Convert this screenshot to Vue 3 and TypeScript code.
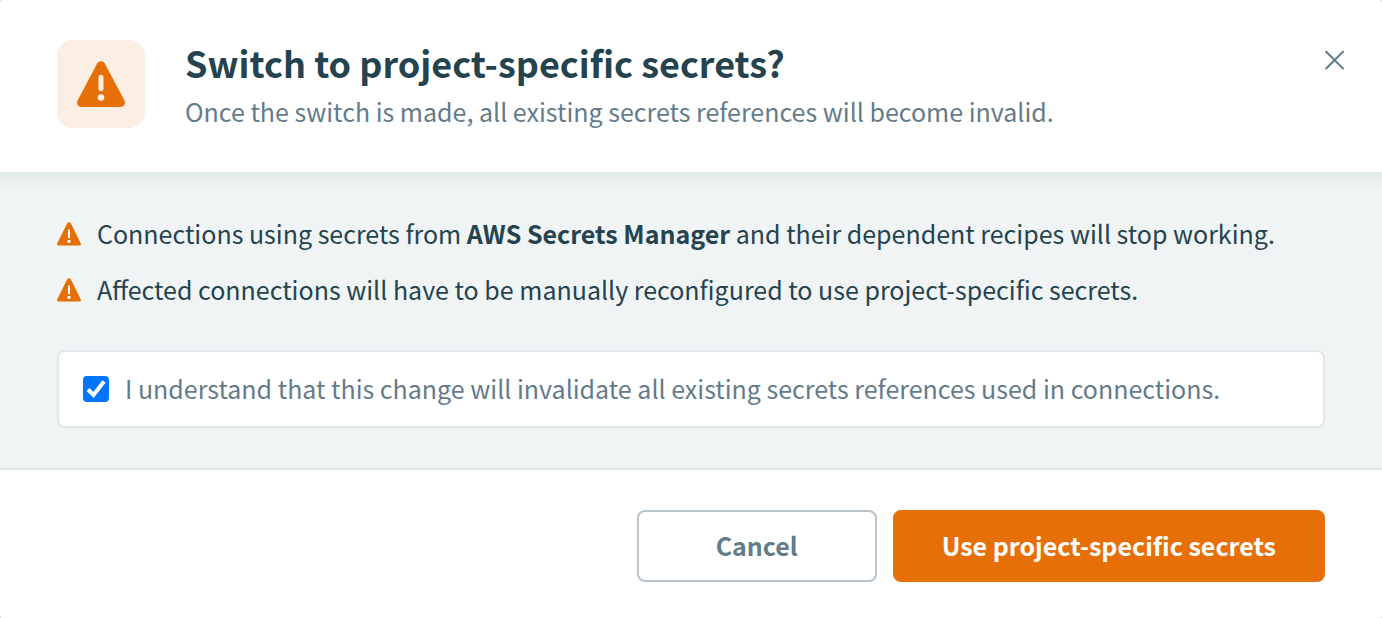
<script setup lang="ts">
import { ref } from 'vue'

interface Warning {
  before: string
  strong?: string
  after?: string
}

const warnings: Warning[] = [
  {
    before: 'Connections using secrets from ',
    strong: 'AWS Secrets Manager',
    after: ' and their dependent recipes will stop working.',
  },
  { before: 'Affected connections will have to be manually reconfigured to use project-specific secrets.' },
]

const understood = ref(true)
</script>

<template>
  <div class="backdrop">
    <section class="dialog" role="dialog" aria-labelledby="dialog-title">
      <header class="header">
        <div class="badge">
          <svg class="badge-icon" viewBox="0 0 48 46" aria-hidden="true">
            <path class="tri" d="M20.3 2.3a4.3 4.3 0 0 1 7.4 0l19.7 37.2c1.600 3.200-.3 6.500-3.800 6.500H4.400C.9 46-1 42.700.6 39.500z" />
            <path class="mark-soft" d="M21.500 16.200a2.500 2.500 0 0 1 5 0v11.600a2.500 2.500 0 0 1-5 0z" />
            <circle class="mark-soft" cx="24" cy="36.500" r="3.300" />
          </svg>
        </div>
        <div class="headings">
          <h1 id="dialog-title" class="title">Switch to project-specific secrets?</h1>
          <p class="subtitle">Once the switch is made, all existing secrets references will become invalid.</p>
        </div>
        <button class="close" type="button" aria-label="Close">
          <svg viewBox="0 0 20 20" aria-hidden="true">
            <path d="M1.200 1.700 18 18.500M18 1.700 1.200 18.500" />
          </svg>
        </button>
      </header>

      <div class="body">
        <ul class="warnings">
          <li v-for="w in warnings" :key="w.before" class="warning">
            <svg class="warning-icon" viewBox="0 0 24 24" aria-hidden="true">
              <path class="tri" d="M10.300 1.100a2 2 0 0 1 3.400 0l10 20.200c.8 1.500 0 2.200-1.600 2.200H1.900C.3 23.500-.5 22.800.3 21.300z" />
              <path class="mark" d="M11 7.500h2v8.500h-2z" />
              <circle class="mark" cx="12" cy="19.300" r="1.600" />
            </svg>
            <span>{{ w.before }}<strong v-if="w.strong">{{ w.strong }}</strong>{{ w.after }}</span>
          </li>
        </ul>
        <label class="confirm">
          <span class="check">
            <input v-model="understood" type="checkbox" />
            <svg v-if="understood" viewBox="0 0 26 26" aria-hidden="true">
              <path d="M5 13.500 10.500 19 21 5.500" />
            </svg>
          </span>
          <span>I understand that this change will invalidate all existing secrets references used in connections.</span>
        </label>
      </div>

      <footer class="footer">
        <button class="btn cancel" type="button">Cancel</button>
        <button class="btn primary" type="button" :disabled="!understood">Use project-specific secrets</button>
      </footer>
    </section>
  </div>
</template>

<style>
body {
  margin: 0;
}
</style>

<style scoped>
.backdrop {
  background: #d5d9dc;
}

.dialog {
  overflow: hidden;
  border-radius: 3px;
  background: #fff;
  color: #24434f;
  font-family: "Noto Sans CJK SC", "Noto Sans", sans-serif;
  font-size: 25px;
  line-height: 38px;
}

.header {
  display: flex;
  align-items: flex-start;
  padding: 40px 37px 44px 57px;
}

.badge {
  display: flex;
  flex: none;
  align-items: center;
  justify-content: center;
  width: 88px;
  height: 88px;
  border-radius: 16px;
  background: #fbeee2;
}

.badge-icon {
  width: 48px;
  height: 46px;
}

.tri {
  fill: #e67007;
}

.mark-soft {
  fill: #fbeee2;
}

.mark {
  fill: #fff;
}

.headings {
  flex: 1;
  margin-left: 40px;
}

.title {
  margin: 0;
  font-size: 36px;
  font-weight: 700;
  line-height: 44px;
}

.subtitle {
  margin: 8px 0 -2px;
  color: #647b8a;
}

.close {
  display: flex;
  flex: none;
  margin: 10px 0 0;
  padding: 0;
  border: 0;
  background: none;
  cursor: pointer;
}

.close svg {
  width: 20px;
  height: 20px;
  fill: none;
  stroke: #647b8a;
  stroke-width: 2;
  stroke-linecap: round;
}

.body {
  padding: 42px 57px 40px;
  border-bottom: 2px solid #e2e7ea;
  background: linear-gradient(#e1e6e8, #e8edee 6px, #f0f4f5 18px);
}

.warnings {
  display: flex;
  flex-direction: column;
  gap: 16px;
  margin: 0;
  padding: 0;
  list-style: none;
}

.warning {
  display: flex;
  align-items: flex-start;
  gap: 16px;
}

.warning-icon {
  flex: none;
  width: 24px;
  height: 40px;
}

.warning strong {
  font-weight: 700;
}

.confirm {
  display: flex;
  align-items: flex-start;
  gap: 16px;
  margin-top: 40px;
  padding: 17px 24px;
  border: 2px solid #e2e7ea;
  border-radius: 8px;
  background: #fff;
  color: #647b8a;
}

.check {
  display: grid;
  flex: none;
  width: 26px;
  height: 26px;
  margin: 7px 0;
}

.check input,
.check svg {
  grid-area: 1 / 1;
  width: 26px;
  height: 26px;
  margin: 0;
}

.check input {
  appearance: none;
  border: 2px solid #b8c4cd;
  border-radius: 4px;
}

.check input:checked {
  border-color: #0075ff;
  background: #0075ff;
}

.check svg {
  fill: none;
  stroke: #fff;
  stroke-width: 4;
  pointer-events: none;
}

.footer {
  display: flex;
  justify-content: flex-end;
  gap: 16px;
  padding: 40px 57px 36px;
}

.btn {
  box-sizing: border-box;
  min-width: 240px;
  height: 72px;
  padding: 0 47px 2px;
  border: 2px solid #b8c4cd;
  border-radius: 8px;
  background: #fff;
  color: #647b8a;
  font: inherit;
  font-weight: 700;
  cursor: pointer;
}

.primary {
  border-color: #e67007;
  background: #e67007;
  color: #fff;
}
</style>
